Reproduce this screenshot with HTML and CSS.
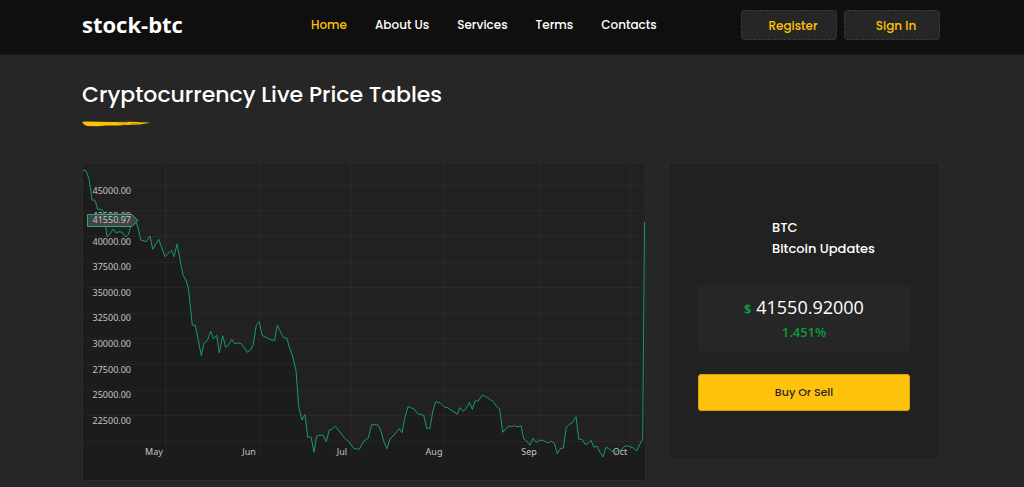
FILE: index.html
```html
<!DOCTYPE html>
<html lang="en">
<head>
<meta charset="utf-8">
<meta name="viewport" content="width=device-width, initial-scale=1">
<title>stock-btc</title>
<link rel="stylesheet" href="styles.css">
</head>
<body>
<header class="header">
  <a class="brand" href="#">stock-btc</a>
  <nav class="nav" aria-label="Main">
    <a class="nav-link active" href="#">Home</a>
    <a class="nav-link" href="#">About Us</a>
    <a class="nav-link" href="#">Services</a>
    <a class="nav-link" href="#">Terms</a>
    <a class="nav-link" href="#">Contacts</a>
  </nav>
  <div class="account">
    <a class="account-link" href="#">Register</a>
    <a class="account-link" href="#">Sign In</a>
  </div>
</header>
<main class="main">
  <h1 class="title">Cryptocurrency Live Price Tables</h1>
  <svg class="brush" viewBox="0 0 68 6" aria-hidden="true">
    <path d="M0 1 L3 .6 L30 1 L48 .8 L66 1.2 L67 2 L60 3 L58 3.6 L44 4 L36 4.6 L24 4.6 L16 5.2 L5 5 L2 3.6 Z" fill="#ffc107"/>
    <path d="M36 1.4 H46 M48 2.8 H56 M56 1.6 H66 M40 3.6 H44" stroke="#8a6b12" stroke-width=".6"/>
  </svg>
  <div class="columns">
    <section class="chart" aria-label="Bitcoin price chart">
      <svg class="plot" viewBox="83 163 562 317">
        <path class="area" d="M83 170L86 171L89 179L92 200L95 200.3L97.7 209.3L101 209.3L104 212L107 236.7L110 234L113.3 229L116.3 233L119 231.7L122.3 232.3L125.7 237L128.3 234.3L131 226L134 222L136.3 223L138.3 229L140.7 240L146.3 241.7L150 236L152.7 249.3L158.7 239.3L165 256.7L171.3 250.3L174 256.7L177 244L183 275L186.3 281L188.5 289L192.3 325.3L195.3 325.3L201.3 355.7L204 343.3L207.3 340.7L210.7 331L213.3 338.7L216.7 335.3L219.3 353L222.7 335.7L225.7 347.3L228.7 345L231.7 339.3L234.7 344L238 342.7L241.3 343.7L247.3 352.3L250.7 349.7L253.3 344.7L256.3 325L259.3 321.7L262 335.3L272 340.3L274.7 340.3L277.3 325.3L283.3 337.7L286.7 338L289.7 348.3L292.3 355L296 370.7L298.7 406.7L302 420L305 414.7L307.7 437.3L311 437L314 452.3L316.7 436L323 435L326.3 441.7L329.3 430L332.3 429L335.3 426.3L344.7 438.3L348.7 441.7L353.7 448.3L359.3 449.3L364 441L368.3 438L371.7 424.7L378 425L380.7 430.3L384 442L387 448.7L390 439L395 434L399.3 428.7L402 432.7L404.7 418.3L408 406.7L414 409L418 414L423.7 415.3L426.7 428.3L430 428.3L432.7 411.7L435.7 401.7L440.7 403.3L444.7 407.3L447.7 407.7L457.3 414.3L460 407.7L463 411.3L466 409L469.3 402.3L472.3 409.3L475 401L478.3 401L481.7 395.7L484.7 395.7L493.3 401.7L497.3 407.3L499.7 409L502.7 432.3L508.7 426L511.7 426.7L514.7 425.7L518 427L521 425.7L523.7 439L526.7 441L530 445.3L533 438.3L536.3 442.7L539.3 440.3L542.7 440.3L548.3 443L551.3 441.3L554.3 443.3L557.3 453.7L560.7 448.3L563.3 448.3L566.3 427.7L569.3 424.3L572 423L576 416.7L578.7 439.3L582 439.3L585 444.3L588 443.7L591 440.3L594 447.3L596.7 446L600 452.3L603 457L606 447.3L608.7 448.7L615 453.3L618.3 450L620.7 450.7L624 446.7L627.3 445.7L633.3 448L636.7 451L642.7 438.7L645 222V480H83V170Z"/>
        <path class="grid" d="M82 185.5H646M82 211H646M82 236.5H646M82 262.5H646M82 287.5H646M82 313.5H646M82 339H646M82 364.5H646M82 390.5H646M82 415.5H646M82 441.5H646M165.5 163V456M259.5 163V456M351 163V456M444.5 163V456M539.5 163V456M630.5 163V456"/>
        <g class="label price">
          <text x="131" y="194">45000.00</text>
          <text x="131" y="219">42500.00</text>
          <text x="131" y="245">40000.00</text>
          <text x="131" y="270">37500.00</text>
          <text x="131" y="296">35000.00</text>
          <text x="131" y="321">32500.00</text>
          <text x="131" y="347">30000.00</text>
          <text x="131" y="373">27500.00</text>
          <text x="131" y="398">25000.00</text>
          <text x="131" y="424">22500.00</text>
        </g>
        <g class="label month">
          <text x="154" y="455">May</text>
          <text x="249" y="455">Jun</text>
          <text x="342" y="455">Jul</text>
          <text x="434" y="455">Aug</text>
          <text x="529" y="455">Sep</text>
          <text x="620" y="455">Oct</text>
        </g>
        <path class="line" d="M83 170L86 171L89 179L92 200L95 200.3L97.7 209.3L101 209.3L104 212L107 236.7L110 234L113.3 229L116.3 233L119 231.7L122.3 232.3L125.7 237L128.3 234.3L131 226L134 222L136.3 223L138.3 229L140.7 240L146.3 241.7L150 236L152.7 249.3L158.7 239.3L165 256.7L171.3 250.3L174 256.7L177 244L183 275L186.3 281L188.5 289L192.3 325.3L195.3 325.3L201.3 355.7L204 343.3L207.3 340.7L210.7 331L213.3 338.7L216.7 335.3L219.3 353L222.7 335.7L225.7 347.3L228.7 345L231.7 339.3L234.7 344L238 342.7L241.3 343.7L247.3 352.3L250.7 349.7L253.3 344.7L256.3 325L259.3 321.7L262 335.3L272 340.3L274.7 340.3L277.3 325.3L283.3 337.7L286.7 338L289.7 348.3L292.3 355L296 370.7L298.7 406.7L302 420L305 414.7L307.7 437.3L311 437L314 452.3L316.7 436L323 435L326.3 441.7L329.3 430L332.3 429L335.3 426.3L344.7 438.3L348.7 441.7L353.7 448.3L359.3 449.3L364 441L368.3 438L371.7 424.7L378 425L380.7 430.3L384 442L387 448.7L390 439L395 434L399.3 428.7L402 432.7L404.7 418.3L408 406.7L414 409L418 414L423.7 415.3L426.7 428.3L430 428.3L432.7 411.7L435.7 401.7L440.7 403.3L444.7 407.3L447.7 407.7L457.3 414.3L460 407.7L463 411.3L466 409L469.3 402.3L472.3 409.3L475 401L478.3 401L481.7 395.7L484.7 395.7L493.3 401.7L497.3 407.3L499.7 409L502.7 432.3L508.7 426L511.7 426.7L514.7 425.7L518 427L521 425.7L523.7 439L526.7 441L530 445.3L533 438.3L536.3 442.7L539.3 440.3L542.7 440.3L548.3 443L551.3 441.3L554.3 443.3L557.3 453.7L560.7 448.3L563.3 448.3L566.3 427.7L569.3 424.3L572 423L576 416.7L578.7 439.3L582 439.3L585 444.3L588 443.7L591 440.3L594 447.3L596.7 446L600 452.3L603 457L606 447.3L608.7 448.7L615 453.3L618.3 450L620.7 450.7L624 446.7L627.3 445.7L633.3 448L636.7 451L642.7 438.7L644.5 222"/>
        <path class="tag" d="M87.5 214.5H132L138 220.5L132 226.5H87.5Z"/>
        <text class="label price" x="131" y="223">41550.97</text>
      </svg>
    </section>
    <section class="card">
      <h2 class="coin">BTC<br>Bitcoin Updates</h2>
      <div class="quote">
        <p class="amount"><span class="currency">$</span> 41550.92000</p>
        <p class="change">1.451%</p>
      </div>
      <button class="trade" type="button">Buy Or Sell</button>
    </section>
  </div>
</main>
</body>
</html>
```
FILE: styles.css
```css
* {
  box-sizing: border-box;
}

body {
  margin: 0;
  background: #262626;
  color: #fff;
  font-family: Poppins, Inter, sans-serif;
}

a {
  color: inherit;
  text-decoration: none;
}

.header {
  display: grid;
  grid-template-columns: 229px 1fr auto;
  align-items: center;
  padding: 10px 84px 14px 82px;
  background: #0f0f0f;
  border-bottom: 1px solid #1c1c1c;
}

.brand {
  font: 700 22px/28px "Open Sans", sans-serif;
  padding-bottom: 2px;
}

.nav {
  display: flex;
  gap: 28px;
  font-size: 12px;
  font-weight: 500;
  line-height: 18px;
}

.active {
  color: #ffc107;
}

.account {
  display: flex;
  gap: 7px;
}

.account-link {
  width: 96px;
  padding: 5px 0 4px 8px;
  border: 1px dashed #3a3a3a;
  border-radius: 4px;
  background: #262626;
  color: #ffc107;
  font-size: 12px;
  font-weight: 500;
  line-height: 19px;
  text-align: center;
}

.main {
  padding: 23px 84px 6px 82px;
}

.title {
  margin: 0;
  font-size: 22px;
  font-weight: 500;
  line-height: 34px;
}

.brush {
  display: block;
  width: 68px;
  height: 6px;
  margin: 9px 0 35px;
}

.columns {
  display: grid;
  grid-template-columns: 564fr 272fr;
  gap: 22px;
  align-items: start;
}

.chart {
  border: 1px solid #2a2a2a;
  background: #212121;
}

.plot {
  display: block;
  width: 100%;
  height: auto;
}

.area {
  fill: #1c1c1c;
}

.grid {
  fill: none;
  stroke: #fff;
  stroke-opacity: 0.04;
}

.line {
  fill: none;
  stroke: #1a9870;
  stroke-width: 1;
  stroke-linejoin: round;
}

.label {
  fill: #c4c4c4;
  font: 9px "Noto Sans", sans-serif;
}

.price {
  text-anchor: end;
}

.month {
  text-anchor: middle;
}

.tag {
  fill: #434343;
  stroke: #1fae80;
}

.card {
  display: grid;
  padding: 54px 29px 48px;
  border: 1px solid #2a2a2a;
  background: #212121;
}

.coin {
  margin: 0 0 26px 74px;
  font-size: 13px;
  font-weight: 500;
  line-height: 21px;
}

.quote {
  padding: 9px 0 8px;
  border: 1px solid #292929;
  background: #262626;
  font-family: "Open Sans", sans-serif;
  text-align: center;
}

.amount {
  margin: 0;
  font-size: 18px;
  line-height: 25px;
}

.currency {
  color: #0b9b3c;
  font-size: 13px;
  font-weight: 700;
}

.change {
  margin: 0;
  color: #0b9b3c;
  font-size: 13px;
  font-weight: 600;
  line-height: 20px;
}

.trade {
  margin-top: 23px;
  padding: 0;
  border: 1px solid #d6a30c;
  border-radius: 3px;
  background: #ffc20c;
  color: #262626;
  font-family: inherit;
  font-size: 11px;
  font-weight: 500;
  line-height: 35px;
}
```
